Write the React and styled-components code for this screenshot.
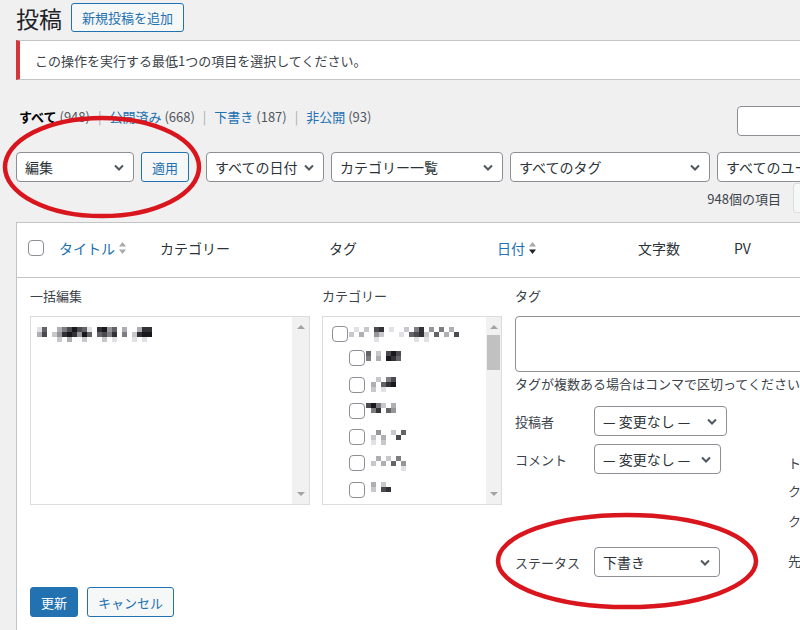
import React from 'react';
import styled, { createGlobalStyle } from 'styled-components';

const GlobalStyle = createGlobalStyle`
  html, body {
    margin: 0;
    padding: 0;
    background: #f0f0f1;
    overflow: hidden;
  }
  body {
    font-family: "Noto Sans CJK JP", "Liberation Sans", sans-serif;
    font-size: 13px;
    color: #3c434a;
  }
`;

const ellipses = [
  { cx: 102, cy: 167, rx: 97, ry: 49 },
  { cx: 627, cy: 561, rx: 129, ry: 46 },
];

const titleMosaic = [
  '16..3579761.8946.3..388',
  '37.24898496.6758.5.2899',
  '....2.3..2...2.1...1.1.',
];

const categories = [
  { level: 0, rows: ['.1.2.78.1..2.58.4.5.3.', '2.3..42...1.6782.6.3.7', '.....1.......1.1.......'] },
  { level: 1, rows: ['6.2.797', '5.3.986', '......'] },
  { level: 1, rows: ['..2.57', '.3.689', '.2.1..'] },
  { level: 1, rows: ['7952.3', '.58.64.', '.....'] },
  { level: 1, rows: ['..4..2.6', '.2.3..7.', '.1.2....'] },
  { level: 1, rows: ['..3.2.5.', '.2.3.6.4', '.......1'] },
  { level: 1, rows: ['.3.2', '.2.78', '....'] },
];

const Mosaic = ({ rows, cell = 5 }) => {
  const width = Math.max(...rows.map((r) => r.length)) * cell;
  return (
    <svg width={width} height={rows.length * cell} shapeRendering="crispEdges">
      {rows.map((row, y) =>
        row.split('').map((ch, x) => {
          if (ch === '.') return null;
          const v = Math.round(250 - Number(ch) * 25);
          return (
            <rect key={`${x}-${y}`} x={x * cell} y={y * cell} width={cell} height={cell} fill={`rgb(${v},${v},${v + 4})`} />
          );
        })
      )}
    </svg>
  );
};

const Chevron = () => (
  <svg width="10" height="7" viewBox="0 0 10 7">
    <path d="M1 1.5 L5 5.5 L9 1.5" stroke="#50575e" strokeWidth="2" fill="none" />
  </svg>
);

const SortIcon = ({ active }) => (
  <svg width="9" height="16" viewBox="0 0 9 16">
    <polygon points="1,6.5 4.5,2 8,6.5" fill="#a7aaad" />
    <polygon points="1,9.5 4.5,14 8,9.5" fill={active ? '#1d2327' : '#a7aaad'} />
  </svg>
);

const Select = ({ w, children }) => (
  <SelectBox $w={w}>
    <span>{children}</span>
    <Chevron />
  </SelectBox>
);

export default function App() {
  return (
    <>
      <GlobalStyle />
      <Page>
        <HeaderRow>
          <Title>投稿</Title>
          <Button $h={29}>新規投稿を追加</Button>
        </HeaderRow>

        <Notice>この操作を実行する最低1つの項目を選択してください。</Notice>

        <SubRow>
          <SubList>
            <Current>すべて</Current> <Count>(948)</Count>
            <Sep>|</Sep>
            <SubLink>公開済み</SubLink> <Count>(668)</Count>
            <Sep>|</Sep>
            <SubLink>下書き</SubLink> <Count>(187)</Count>
            <Sep>|</Sep>
            <SubLink>非公開</SubLink> <Count>(93)</Count>
          </SubList>
          <SearchBox>
            <SearchInput />
            <Button $w={80}>投稿を検索</Button>
          </SearchBox>
        </SubRow>

        <FilterRow>
          <Select w={118}>編集</Select>
          <Button>適用</Button>
          <FilterGroup>
            <Select w={118}>すべての日付</Select>
            <Select w={172}>カテゴリー一覧</Select>
            <Select w={200}>すべてのタグ</Select>
            <Select w={150}>すべてのユーザー</Select>
            <Button>絞り込み</Button>
          </FilterGroup>
        </FilterRow>

        <PagRow>
          <span>948個の項目</span>
          <PageLinks>
            <PageButton>«</PageButton>
            <PageButton>‹</PageButton>
            <PageInput>1</PageInput>
            <span>/ 38</span>
            <PageButton $on>›</PageButton>
            <PageButton $on>»</PageButton>
          </PageLinks>
        </PagRow>

        <Table>
          <HeadRow>
            <HeadCell $pad={11}>
              <Check />
            </HeadCell>
            <HeadCell $link>
              タイトル <SortIcon />
            </HeadCell>
            <HeadCell>カテゴリー</HeadCell>
            <HeadCell>タグ</HeadCell>
            <HeadCell $link>
              日付 <SortIcon active />
            </HeadCell>
            <HeadCell>文字数</HeadCell>
            <HeadCell>PV</HeadCell>
          </HeadRow>

          <BulkEdit>
            <Columns>
              <Field $w={280}>
                <Label>一括編集</Label>
                <ListBox>
                  <ListBody>
                    <Mosaic rows={titleMosaic} />
                  </ListBody>
                  <ScrollBar>
                    <Arrow $up />
                    <Arrow />
                  </ScrollBar>
                </ListBox>
              </Field>

              <Field $w={180}>
                <Label>カテゴリー</Label>
                <ListBox>
                  <CatList>
                    {categories.map((c, i) => (
                      <CatItem key={i} $level={c.level}>
                        <Check />
                        <Mosaic rows={c.rows} />
                      </CatItem>
                    ))}
                  </CatList>
                  <ScrollBar $narrow>
                    <Arrow $up />
                    <Thumb />
                    <Arrow />
                  </ScrollBar>
                </ListBox>
              </Field>

              <RightCol>
                <Label>タグ</Label>
                <TagArea />
                <Help>タグが複数ある場合はコンマで区切ってください。</Help>
                <FieldSplit>
                  <FieldRows>
                    <FieldRow>
                      <RowLabel>投稿者</RowLabel>
                      <Select w={133}>— 変更なし —</Select>
                    </FieldRow>
                    <FieldRow>
                      <RowLabel>コメント</RowLabel>
                      <Select w={127}>— 変更なし —</Select>
                    </FieldRow>
                    <FieldRow $gap={73}>
                      <RowLabel>ステータス</RowLabel>
                      <Select w={126}>下書き</Select>
                    </FieldRow>
                  </FieldRows>
                  <SideFields>
                    <SideLine $after={8}>トラックバック</SideLine>
                    <SideLine $after={10}>ク 許可</SideLine>
                    <SideLine $after={20}>ク 許可しない</SideLine>
                    <SideLine>先頭に固定表示</SideLine>
                  </SideFields>
                </FieldSplit>
              </RightCol>
            </Columns>

            <Actions>
              <Button $primary>更新</Button>
              <Button>キャンセル</Button>
            </Actions>
          </BulkEdit>
        </Table>

        <Marks width="800" height="630">
          {ellipses.map((e, i) => (
            <ellipse key={i} {...e} fill="none" stroke="#d9161e" strokeWidth="4.5" />
          ))}
        </Marks>
      </Page>
    </>
  );
}

const Page = styled.div`
  position: relative;
  width: 1057px;
  padding-left: 16px;
`;

const HeaderRow = styled.div`
  display: flex;
  align-items: center;
  gap: 9px;
  padding-top: 3px;
`;

const Title = styled.h1`
  margin: 0;
  font-size: 23px;
  font-weight: 400;
  line-height: 28px;
  color: #1d2327;
`;

const Button = styled.button`
  flex: none;
  ${({ $w }) => ($w ? `width: ${$w}px;` : '')}
  height: ${({ $h }) => $h || 30}px;
  box-sizing: border-box;
  padding: 0 10px;
  border: 1px solid #2271b1;
  border-radius: 3px;
  background: ${({ $primary }) => ($primary ? '#2271b1' : '#f6f7f7')};
  color: ${({ $primary }) => ($primary ? '#fff' : '#2271b1')};
  font-family: inherit;
  font-size: 13px;
  line-height: 1;
  white-space: nowrap;
  overflow: hidden;
`;

const Notice = styled.div`
  display: flex;
  align-items: center;
  height: 40px;
  box-sizing: border-box;
  margin-top: 8px;
  padding-left: 15px;
  border: 1px solid #c3c4c7;
  border-left: 4px solid #d63638;
  background: #fff;
  color: #3c434a;
  font-size: 13px;
`;

const SubRow = styled.div`
  display: flex;
  justify-content: space-between;
  margin-top: 26px;
`;

const SubList = styled.div`
  padding-left: 3px;
  line-height: 22px;
  font-size: 13px;
  white-space: nowrap;
`;

const Current = styled.span`
  font-weight: 700;
  color: #000;
`;

const Count = styled.span`
  color: #50575e;
`;

const Sep = styled.span`
  margin: 0 8px;
  color: #a7aaad;
`;

const SubLink = styled.span`
  color: #2271b1;
`;

const SearchBox = styled.div`
  display: flex;
  gap: 6px;
`;

const SearchInput = styled.div`
  width: 250px;
  height: 30px;
  box-sizing: border-box;
  border: 1px solid #8c8f94;
  border-radius: 4px;
  background: #fff;
`;

const FilterRow = styled.div`
  display: flex;
  gap: 7px;
  margin-top: 16px;
  white-space: nowrap;
`;

const FilterGroup = styled.div`
  display: flex;
  gap: 7px;
  margin-left: 10px;
`;

const SelectBox = styled.div`
  flex: none;
  display: flex;
  align-items: center;
  justify-content: space-between;
  width: ${({ $w }) => $w}px;
  height: 30px;
  box-sizing: border-box;
  padding: 0 9px 0 8px;
  border: 1px solid #8c8f94;
  border-radius: 4px;
  background: #fff;
  color: #2c3338;
  font-size: 14px;
  white-space: nowrap;
  overflow: hidden;
`;

const PagRow = styled.div`
  display: flex;
  justify-content: flex-end;
  align-items: center;
  gap: 12px;
  height: 26px;
  margin-top: 3px;
  color: #3c434a;
`;

const PageLinks = styled.div`
  display: flex;
  align-items: center;
  gap: 6px;
  width: 280px;
`;

const PageButton = styled.span`
  display: inline-flex;
  align-items: center;
  justify-content: center;
  width: 30px;
  height: 30px;
  box-sizing: border-box;
  border: 1px solid ${({ $on }) => ($on ? '#2271b1' : '#dcdcde')};
  border-radius: 3px;
  background: #f6f7f7;
  color: ${({ $on }) => ($on ? '#2271b1' : '#a7aaad')};
  font-size: 16px;
`;

const PageInput = styled.span`
  display: inline-flex;
  align-items: center;
  justify-content: center;
  width: 40px;
  height: 30px;
  box-sizing: border-box;
  border: 1px solid #8c8f94;
  border-radius: 4px;
  background: #fff;
`;

const Table = styled.div`
  margin-top: 11px;
  border: 1px solid #c3c4c7;
  background: #fff;
`;

const HeadRow = styled.div`
  display: grid;
  grid-template-columns: 34px 101px 169px 168px 141px 96px 1fr;
  height: 55px;
  box-sizing: border-box;
  padding-bottom: 5px;
  border-bottom: 1px solid #c3c4c7;
`;

const HeadCell = styled.div`
  display: flex;
  align-items: center;
  gap: 3px;
  padding-left: ${({ $pad }) => $pad || 8}px;
  color: ${({ $link }) => ($link ? '#2271b1' : '#2c3338')};
  font-size: 14px;
  white-space: nowrap;
`;

const Check = styled.span`
  flex: none;
  display: inline-block;
  width: 16px;
  height: 16px;
  box-sizing: border-box;
  border: 1px solid #8c8f94;
  border-radius: 4px;
  background: #fff;
`;

const BulkEdit = styled.div`
  padding: 8px 0 40px 13px;
`;

const Columns = styled.div`
  display: flex;
  gap: 12px;
`;

const Field = styled.div`
  flex: none;
  width: ${({ $w }) => $w}px;
`;

const Label = styled.div`
  height: 20px;
  margin-bottom: 10px;
  line-height: 20px;
  font-size: 13px;
  color: #3c434a;
`;

const ListBox = styled.div`
  display: flex;
  height: 189px;
  box-sizing: border-box;
  border: 1px solid #dcdcde;
  background: #fff;
`;

const ListBody = styled.div`
  flex: 1;
  padding: 10px 0 0 6px;
`;

const ScrollBar = styled.div`
  flex: none;
  display: flex;
  flex-direction: column;
  justify-content: space-between;
  align-items: center;
  width: ${({ $narrow }) => ($narrow ? 15 : 17)}px;
  padding: 8px 0 8px;
  box-sizing: border-box;
  background: #f1f1f1;
`;

const Arrow = styled.span`
  width: 0;
  height: 0;
  border-left: 4px solid transparent;
  border-right: 4px solid transparent;
  ${({ $up }) => ($up ? 'border-bottom: 4px solid #a3a3a3;' : 'border-top: 4px solid #a3a3a3;')}
`;

const Thumb = styled.span`
  width: 13px;
  height: 35px;
  margin: 6px 0 auto;
  background: #c1c1c1;
`;

const CatList = styled.div`
  flex: 1;
  display: flex;
  flex-direction: column;
  gap: 10.3px;
  padding: 9px 0 0 9px;
  overflow: hidden;
`;

const CatItem = styled.div`
  display: flex;
  align-items: center;
  gap: 1px;
  height: 16px;
  padding-left: ${({ $level }) => $level * 17}px;

  &:first-child {
    margin-bottom: -2px;
  }
`;

const RightCol = styled.div`
  flex: 1;
  margin-left: 1px;
`;

const TagArea = styled.div`
  height: 56px;
  box-sizing: border-box;
  border: 1px solid #8c8f94;
  border-radius: 4px;
  background: #fff;
`;

const Help = styled.div`
  margin-top: 2px;
  line-height: 20px;
  font-size: 13px;
  color: #3c434a;
  white-space: nowrap;
`;

const FieldSplit = styled.div`
  display: flex;
  margin-top: 12px;
`;

const FieldRows = styled.div`
  flex: none;
  display: flex;
  flex-direction: column;
  gap: 8px;
  width: 273px;
`;

const FieldRow = styled.div`
  display: flex;
  align-items: center;
  height: 30px;
  margin-top: ${({ $gap }) => ($gap ? $gap - 8 : 0)}px;
`;

const RowLabel = styled.span`
  width: 79px;
  font-size: 13px;
  color: #3c434a;
`;

const SideFields = styled.div`
  padding-top: 47px;
`;

const SideLine = styled.div`
  line-height: 20px;
  margin-bottom: ${({ $after }) => $after || 0}px;
  font-size: 13px;
  color: #3c434a;
  white-space: nowrap;
`;

const Actions = styled.div`
  display: flex;
  gap: 9px;
  margin-top: 10px;
`;

const Marks = styled.svg`
  position: absolute;
  top: 0;
  left: 0;
  pointer-events: none;
`;
